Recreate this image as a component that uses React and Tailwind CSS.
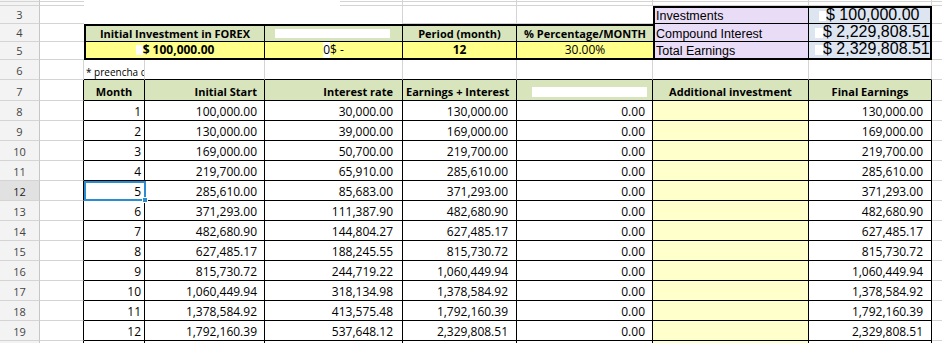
const cols =
  "grid grid-cols-[40px_44px_61px_120px_138px_114px_136px_156px_123px_10px]";

const rows = [
  [8, "1", "100,000.00", "30,000.00", "130,000.00", "0.00", "130,000.00"],
  [9, "2", "130,000.00", "39,000.00", "169,000.00", "0.00", "169,000.00"],
  [10, "3", "169,000.00", "50,700.00", "219,700.00", "0.00", "219,700.00"],
  [11, "4", "219,700.00", "65,910.00", "285,610.00", "0.00", "285,610.00"],
  [12, "5", "285,610.00", "85,683.00", "371,293.00", "0.00", "371,293.00"],
  [13, "6", "371,293.00", "111,387.90", "482,680.90", "0.00", "482,680.90"],
  [14, "7", "482,680.90", "144,804.27", "627,485.17", "0.00", "627,485.17"],
  [15, "8", "627,485.17", "188,245.55", "815,730.72", "0.00", "815,730.72"],
  [16, "9", "815,730.72", "244,719.22", "1,060,449.94", "0.00", "1,060,449.94"],
  [17, "10", "1,060,449.94", "318,134.98", "1,378,584.92", "0.00", "1,378,584.92"],
  [18, "11", "1,378,584.92", "413,575.48", "1,792,160.39", "0.00", "1,792,160.39"],
  [19, "12", "1,792,160.39", "537,648.12", "2,329,808.51", "0.00", "2,329,808.51"],
];

const RowHead = ({ n, active, className = "" }) => (
  <div
    className={`flex items-end justify-center leading-[16px] text-[11px] border-r border-b border-r-[#c6c6c6] border-b-[#d4d4d4] ${
      active ? "bg-[#e1e1e1] text-[#222]" : "bg-[#f3f3f3] text-[#444]"
    } ${className}`}
  >
    {n}
  </div>
);

const num = "flex items-end justify-end leading-[17px] border-r border-b border-black whitespace-nowrap overflow-hidden";
const head = "flex items-end pb-[1px] leading-[15px] text-[11px] font-bold bg-[#d8e4bc] border-r border-b border-black whitespace-nowrap";

const DataRow = ({ r, label = true }) => {
  const [n, month, start, rate, earn, extra, final] = r;
  const selected = n === 12;
  return (
    <div className={`${cols} h-[20px]`}>
      <RowHead n={label ? n : ""} active={selected} />
      <div className="border-r border-b border-r-black border-b-[#d4d4d4]" />
      <div className={`${num} pr-[3px] ${selected ? "relative overflow-visible" : ""}`}>
        {month}
        {selected && (
          <>
            <div className="absolute left-0 top-0 w-[62px] h-[20px] border-2 border-[#2a8dd4]" />
            <div className="absolute left-[58px] top-[16px] w-[6px] h-[6px] bg-[#2a8dd4] border border-white" />
          </>
        )}
      </div>
      <div className={`${num} pr-[7px]`}>{start}</div>
      <div className={`${num} pr-[9px]`}>{rate}</div>
      <div className={`${num} pr-[8px]`}>{earn}</div>
      <div className={`${num} pr-[7px]`}>{extra}</div>
      <div className="bg-[#ffffcc] border-r border-b border-black" />
      <div className={`${num} pr-[8px]`}>{final}</div>
      <div className="border-b border-[#d4d4d4]" />
    </div>
  );
};

export default function App() {
  return (
    <div className="w-[942px] bg-white text-black font-['Open_Sans',sans-serif] text-[12px]">
      {/* rows 1-5 with the two framed blocks */}
      <div className={`${cols} grid-rows-[2px_4px_18px_18px_18px]`}>
        <div className="col-start-1 row-start-1 bg-[#f3f3f3] border-r border-b border-r-[#c6c6c6] border-b-[#d4d4d4]" />
        <div className="col-start-1 row-start-2 bg-[#f3f3f3] border-r border-b border-r-[#c6c6c6] border-b-[#d4d4d4]" />
        <RowHead n={3} className="col-start-1 row-start-3" />
        <RowHead n={4} className="col-start-1 row-start-4" />
        <RowHead n={5} className="col-start-1 row-start-5" />

        <div className="col-start-2 row-start-1 border-b border-[#d4d4d4]" />
        <div className="col-start-2 row-start-2 border-b border-[#d4d4d4]" />
        <div className="col-start-2 row-start-3 border-b border-[#d4d4d4]" />
        <div className="col-start-2 row-start-4 border-b border-[#d4d4d4]" />
        <div className="col-start-2 row-start-5 border-b border-[#d4d4d4]" />

        <div className="col-start-5 row-start-1 border-r border-[#d4d4d4]">
          <div className="ml-[75px] h-full border-b border-[#d4d4d4]" />
        </div>
        <div className="col-start-5 row-start-2 border-r border-[#d4d4d4]">
          <div className="ml-[75px] h-full border-b border-[#d4d4d4]" />
        </div>
        <div className="col-start-5 row-start-3 border-r border-[#d4d4d4]" />

        <div className="col-start-6 row-start-1 border-r border-b border-[#d4d4d4]" />
        <div className="col-start-6 row-start-2 border-r border-b border-[#d4d4d4]" />
        <div className="col-start-6 row-start-3 border-r border-b border-[#d4d4d4]" />
        <div className="col-start-7 row-start-1 border-r border-b border-[#d4d4d4]" />
        <div className="col-start-7 row-start-2 border-r border-b border-[#d4d4d4]" />
        <div className="col-start-7 row-start-3 border-b border-[#d4d4d4]" />

        <div className="col-start-8 row-start-1 border-r border-b border-[#d4d4d4]" />
        <div className="col-start-8 row-start-2 border-r border-b border-[#d4d4d4]" />
        <div className="col-start-9 row-start-1 border-r border-b border-[#d4d4d4]" />
        <div className="col-start-9 row-start-2 border-r border-b border-[#d4d4d4]" />

        <div className="col-start-10 row-start-1 border-b border-[#d4d4d4]" />
        <div className="col-start-10 row-start-2 border-b border-[#d4d4d4]" />
        <div className="col-start-10 row-start-3 border-b border-[#d4d4d4]" />
        <div className="col-start-10 row-start-4 border-b border-[#d4d4d4]" />
        <div className="col-start-10 row-start-5 border-b border-[#d4d4d4]" />

        {/* investment inputs */}
        <div className="col-start-3 col-span-5 row-start-4 row-span-2 border-2 border-r-0 border-black grid grid-cols-[179px_138px_114px_136px] grid-rows-[16px_16px]">
          <div className="flex items-end justify-center leading-[15px] text-[11px] font-bold bg-[#d8e4bc] border-r border-b border-black whitespace-nowrap">
            Initial Investment in FOREX
          </div>
          <div className="bg-[#d8e4bc] border-r border-b border-black pl-[10px] pt-[3px]">
            <div className="w-[115px] h-[9px] bg-white" />
          </div>
          <div className="flex items-end justify-center leading-[15px] text-[11px] font-bold bg-[#d8e4bc] border-r border-b border-black whitespace-nowrap">
            Period (month)
          </div>
          <div className="flex items-end justify-center leading-[15px] text-[11px] font-bold bg-[#d8e4bc] border-b border-black whitespace-nowrap">
            % Percentage/MONTH
          </div>

          <div className="flex items-center justify-center leading-[16px] font-bold bg-[#ffff8a] border-r border-black whitespace-nowrap">
            <span className="inline-block w-[7px] h-[10px] bg-white" />
            $ 100,000.00
          </div>
          <div className="flex items-center justify-center leading-[16px] bg-[#ffff8a] border-r border-black whitespace-nowrap">
            <span className="bg-white">0</span>$ -
          </div>
          <div className="flex items-center justify-center leading-[16px] font-bold bg-[#ffff8a] border-r border-black">
            12
          </div>
          <div className="flex items-center justify-center leading-[16px] bg-[#ffff8a]">
            30.00%
          </div>
        </div>

        {/* summary */}
        <div className="col-start-8 col-span-2 row-start-3 row-span-3 border-2 border-black grid grid-cols-[154px_121px] grid-rows-[16px_18px_16px] font-['Liberation_Sans',Arial,sans-serif]">
          <div className="flex items-end pl-[1px] leading-[14px] text-[12.5px] bg-[#e9dcf7] border-r border-b border-black">
            Investments
          </div>
          <div className="flex items-end pb-[1px] pl-[10px] leading-[14px] text-[16px] bg-[#dde5f1] border-b border-black whitespace-nowrap overflow-x-clip">
            <span className="inline-block shrink-0 w-[7px] h-[10px] mb-[1px] bg-white" />
            $ 100,000.00
          </div>
          <div className="flex items-end pl-[1px] leading-[14px] text-[12.5px] bg-[#e9dcf7] border-r border-b border-black">
            Compound Interest
          </div>
          <div className="flex items-end pb-[2px] pl-[6px] leading-[14px] text-[16px] bg-[#dde5f1] border-b border-black whitespace-nowrap overflow-x-clip">
            <span className="inline-block shrink-0 w-[8px] h-[10px] mb-[1px] bg-white" />
            $ 2,229,808.51
          </div>
          <div className="flex items-end pl-[1px] leading-[14px] text-[12.5px] bg-[#e9dcf7] border-r border-black">
            Total Earnings
          </div>
          <div className="flex items-end pb-[2px] pl-[6px] leading-[14px] text-[16px] bg-[#dde5f1] whitespace-nowrap overflow-x-clip">
            <span className="inline-block shrink-0 w-[8px] h-[10px] mb-[1px] bg-white" />
            $ 2,329,808.51
          </div>
        </div>
      </div>

      {/* row 6 note */}
      <div className={`${cols} h-[20px]`}>
        <RowHead n={6} />
        <div className="border-r border-b border-[#d4d4d4]" />
        <div className="flex items-end pl-[2px] leading-[13px] text-[10px] whitespace-nowrap overflow-hidden border-r border-b border-r-[#d4d4d4] border-b-black">
          * preencha c
        </div>
        <div className="border-r border-b border-r-[#d4d4d4] border-b-black" />
        <div className="border-r border-b border-r-[#d4d4d4] border-b-black" />
        <div className="border-r border-b border-r-[#d4d4d4] border-b-black" />
        <div className="border-r border-b border-r-[#d4d4d4] border-b-black" />
        <div className="border-r border-b border-r-[#d4d4d4] border-b-black" />
        <div className="border-r border-b border-r-[#d4d4d4] border-b-black" />
        <div className="border-b border-[#d4d4d4]" />
      </div>

      {/* row 7 headers */}
      <div className={`${cols} h-[21px]`}>
        <RowHead n={7} />
        <div className="border-r border-b border-r-black border-b-[#d4d4d4]" />
        <div className={`${head} justify-center`}>Month</div>
        <div className={`${head} justify-end pr-[7px]`}>Initial Start</div>
        <div className={`${head} justify-end pr-[9px]`}>Interest rate</div>
        <div className={`${head} justify-start pl-[3px]`}>Earnings + Interest</div>
        <div className={`${head} items-start pt-[7px] pl-[15px]`}>
          <div className="w-[115px] h-[10px] bg-white" />
        </div>
        <div className={`${head} justify-center`}>Additional investment</div>
        <div className={`${head} justify-center`}>Final Earnings</div>
        <div className="border-b border-[#d4d4d4]" />
      </div>

      {rows.map((r) => (
        <DataRow key={r[0]} r={r} />
      ))}
      <DataRow r={[20, "", "", "", "", "", ""]} label={false} />
    </div>
  );
}
